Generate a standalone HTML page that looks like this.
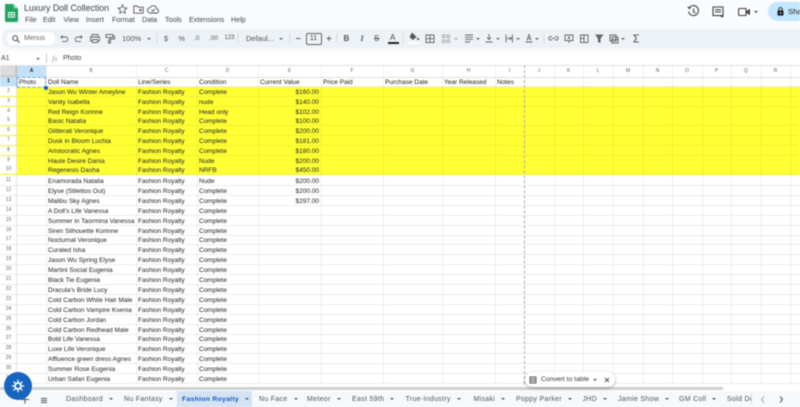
<!DOCTYPE html>
<html><head><meta charset="utf-8"><style>
*{box-sizing:border-box}
html,body{margin:0;padding:0;width:800px;height:407px;overflow:hidden;background:#fff}
body{font-family:"Liberation Sans",sans-serif;color:#333;position:relative}
#w{position:absolute;left:0;top:0;width:800px;height:407px;overflow:hidden;filter:blur(.45px)}
.a{position:absolute;white-space:nowrap}
.m{font-size:7.2px;color:#444;top:15px;line-height:10px}
.tb{font-size:7.2px;color:#555;top:34px;line-height:9px}
.c{position:absolute;border:2px solid transparent;border-top:2.5px solid #666;border-bottom:0;top:37.5px}
.r{position:absolute;left:0;width:800px;height:10px;display:grid;grid-template-columns:17px 29px 90px 61px 61px 63px 62px 59px 53px 29px;font-size:6.5px;color:#222;border-bottom:1px solid #ebeced}
.r>*{font-style:normal;font-weight:400;padding-left:2px;white-space:nowrap;overflow:hidden;line-height:9px;position:relative;top:1px}
.r>b{font-size:5px;text-align:center;color:#666;padding:0;top:0;background:#fff}
.r>.n{text-align:right;padding-right:2px}
.y{background:#ffff33;border-bottom-color:#f2f230}
.v{position:absolute;top:65px;height:319px;width:1px;background:rgba(0,0,0,.06)}
.ch{position:absolute;top:65px;height:12px;font-size:5px;line-height:12px;text-align:center;color:#666}
.t{position:absolute;top:391px;height:16px;line-height:17px;font-size:7px;letter-spacing:.3px;color:#555;white-space:nowrap}
.t:after{content:"";display:inline-block;margin-left:6px;border:2px solid transparent;border-top:2.5px solid #555;border-bottom:0;vertical-align:1.5px}
svg{position:absolute;overflow:visible}
</style></head><body><div id="w">
<div class="a" style="left:0;top:0;width:800px;height:52px;background:#f9fbfd"></div>
<svg style="left:5px;top:4px" width="13" height="18" viewBox="0 0 13 18"><path d="M1.200 0H8.500L13 4.500V16.800a1.200 1.200 0 0 1-1.200 1.200H1.200A1.200 1.200 0 0 1 0 16.800V1.200A1.200 1.200 0 0 1 1.200 0z" fill="#1fa463"/><path d="M8.500 0V4.500H13z" fill="#8ed1b1"/><path d="M3 8h7v5.600H3zM3.900 9v1.300h2.200V9zM6.900 9v1.300h2.200V9zM3.900 11.100v1.500h2.200v-1.500zM6.900 11.100v1.500h2.200v-1.500z" fill="#f0faf5" fill-rule="evenodd"/></svg>
<div class="a" style="left:24px;top:2px;font-size:8.800px;color:#3c4043;line-height:12px">Luxury Doll Collection</div>
<svg style="left:117px;top:3.500px" width="11" height="10" viewBox="0 0 11 10" fill="none" stroke="#555" stroke-width=".8"><path d="M5.500.8 6.800 3.800 10 4.100 7.600 6.200 8.300 9.300 5.500 7.700 2.700 9.300 3.400 6.200 1 4.100 4.200 3.800z"/></svg>
<svg style="left:133px;top:4.500px" width="11" height="9" viewBox="0 0 11 9" fill="none" stroke="#555" stroke-width=".9"><path d="M.8 1h3.200l1 1.200h5.200v6H.8zM7.500 3.600v3M6 5h3"/></svg>
<svg style="left:147px;top:3.500px" width="12" height="10" viewBox="0 0 12 10" fill="none" stroke="#555" stroke-width=".9"><path d="M3 9h6.500a2 2 0 0 0 .3-4A3.600 3.600 0 0 0 3 3.800 2.600 2.600 0 0 0 3 9zM4.500 6l1.200 1.200L8 5"/></svg>
<div class="a m" style="left:25px">File</div><div class="a m" style="left:43px">Edit</div><div class="a m" style="left:63.500px">View</div><div class="a m" style="left:86px">Insert</div><div class="a m" style="left:112px">Format</div><div class="a m" style="left:142px">Data</div><div class="a m" style="left:165px">Tools</div><div class="a m" style="left:189px">Extensions</div><div class="a m" style="left:231px">Help</div>
<svg style="left:687px;top:5px" width="13" height="13" viewBox="0 0 13 13" fill="none" stroke="#444" stroke-width="1.100"><path d="M2 3.200A5 5 0 1 1 1.500 6.500M.8 1.800 2 3.400 3.800 3M6.500 3.500v3.200l2 1.400"/></svg>
<svg style="left:712px;top:6px" width="12" height="12" viewBox="0 0 12 12" fill="none" stroke="#444" stroke-width="1.100"><path d="M1 1h10v8.600H9.500L11 11.300 8.200 9.600H1zM3 3.800h6M3 6h6"/></svg>
<svg style="left:738px;top:7px" width="13" height="10" viewBox="0 0 13 10"><path d="M1.600 1.500H8v7H1.600a1 1 0 0 1-1-1v-5a1 1 0 0 1 1-1z" fill="none" stroke="#444" stroke-width="1.100"/><path d="M8.500 4 12 1.800v6.400L8.500 6z" fill="#444"/></svg>
<div class="c" style="left:753.500px;top:10.500px;border-top-color:#444"></div>
<div class="a" style="left:768px;top:2px;width:50px;height:19px;background:#c2e7ff;border-radius:10px"></div>
<svg style="left:777px;top:7px" width="7" height="9" viewBox="0 0 7 9"><path d="M1.800 3.500V2.300a1.700 1.700 0 0 1 3.400 0v1.200" fill="none" stroke="#222" stroke-width=".9"/><rect x=".5" y="3.400" width="6" height="5.200" rx=".7" fill="#222"/><circle cx="3.500" cy="6" r=".8" fill="#c2e7ff"/></svg>
<div class="a" style="left:788px;top:7px;font-size:7.600px;color:#222;line-height:9px">Sha</div>

<div class="a" style="left:2px;top:29px;width:798px;height:19px;background:#edf2f6;border-radius:9px 0 0 9px"></div>
<div class="a" style="left:7px;top:32px;width:48px;height:13px;background:#fff;border-radius:7px"></div>
<svg style="left:12px;top:34.500px" width="8" height="8" viewBox="0 0 8 8" fill="none" stroke="#444" stroke-width="1"><circle cx="3.200" cy="3.200" r="2.400"/><path d="M5 5l2.600 2.600"/></svg>
<div class="a" style="left:24px;top:34px;font-size:7px;color:#666;line-height:9px">Menus</div>
<svg style="left:0;top:0" width="800" height="52" fill="none" stroke="#666" stroke-width=".9">
<path d="M61 37h4.500a2.200 2.200 0 0 1 0 4.600H62M62.500 35.400 61 37l1.500 1.500"/>
<path d="M82 37h-4.500a2.200 2.200 0 0 0 0 4.600H81M80.500 35.400 82 37l-1.500 1.500"/>
<path d="M92 37v-2.500h6V37M92 41h-1.500v-4h9v4H98M92.500 39.500h5v3h-5z"/>
<path d="M106 34.500h7v3h-7zM113 36h1.500v3h-5v1.500M108.500 40.500h2v2.500h-2z"/>
<path d="M157 33v10M238 33v10M290 33v10M337 33v10M403 33v10M544 33v10" stroke="#d5d8db"/>
<path d="M296 38.500h4.500M326.500 38.500h5M329 36v5"/>
<path d="M426 35h8v7.500h-8zM426 38.700h8M430 35v7.500"/>
<path d="M442.500 35h2.500v2.500h-2.500zM442.500 40h2.500v2.500h-2.500zM447 35h2.500v2.500H447zM447 40h2.500v2.500H447z" stroke="#aaa"/>
<path d="M465 35h8M465 37.300h8M465 39.600h8M465 42h5"/>
<path d="M489 34v5.500M487 37.500l2 2 2-2M485.500 42h7"/>
<path d="M506 34.500v8M512.500 34.500v8M507 38.500h4.500M510 37l1.500 1.500-1.500 1.500"/>
<path d="M525.500 42h7M527 40.500l2-6 2 6M527.700 38.500h2.600"/>
<path d="M552 40h-1.500a1.700 1.700 0 0 1 0-3.400H552M555 36.600h1.500a1.700 1.700 0 0 1 0 3.400H555M551.500 38.300h4"/>
<path d="M565 35h8v5.500h-2.500L569 42v-1.500h-4zM569 36.200v3M567.500 37.700h3"/>
<path d="M580.500 35h7.500v7.500h-7.500zM584 35v7.500M580.500 38.500h3.500"/>
<path d="M596 35h6.500l-2.400 3.500v3.500h-1.700v-3.500z" fill="#666"/>
<path d="M610 35h6v6h-6zM612 37h6v6h-6zM612 39.500h6" stroke-width="1"/>
<path d="M639 35h-5l2.500 3.500-2.500 3.500h5" stroke-width="1.100"/>
</svg>
<div class="a tb" style="left:122px;font-size:7.500px">100%</div>
<div class="c" style="left:146.500px"></div>
<div class="a tb" style="left:164px">$</div>
<div class="a tb" style="left:178.500px">%</div>
<div class="a tb" style="left:194px;font-size:6.500px">.0</div>
<div class="a tb" style="left:209px;font-size:6.500px">.00</div>
<div class="a tb" style="left:224.500px;font-size:6px">123</div>
<div class="a tb" style="left:246px;font-size:7.500px">Defaul...</div>
<div class="c" style="left:279px"></div>
<div class="a" style="left:305.500px;top:32.500px;width:16px;height:12px;border:.8px solid #666;border-radius:2px;font-size:7px;line-height:10.500px;text-align:center;color:#444">11</div>
<div class="a" style="left:343.500px;top:34px;font-size:8px;font-weight:700;color:#555;line-height:9px">B</div>
<div class="a" style="left:360.500px;top:34px;font-size:8px;font-style:italic;color:#555;line-height:9px;font-family:'Liberation Serif',serif;font-weight:700">I</div>
<div class="a" style="left:374px;top:34px;font-size:8px;color:#555;line-height:9px;text-decoration:line-through">S</div>
<div class="a" style="left:390px;top:33px;font-size:8px;color:#444;line-height:9px">A</div>
<div class="a" style="left:388px;top:42px;width:11px;height:1.500px;background:#222"></div>
<svg style="left:408px;top:32px" width="12" height="9" viewBox="0 0 12 9"><path d="M4 .5 8.500 5 5 8 1.500 5z" fill="#555"/><circle cx="10" cy="7" r="1.100" fill="#555"/></svg>
<div class="a" style="left:408px;top:42px;width:11px;height:1.500px;background:#fff"></div>
<div class="c" style="left:454px;border-top-color:#aaa"></div>
<div class="c" style="left:476px"></div>
<div class="c" style="left:496px"></div>
<div class="c" style="left:516px"></div>
<div class="c" style="left:535px"></div>
<div class="c" style="left:621px"></div>

<div class="a" style="left:1px;top:54px;font-size:7px;color:#444;line-height:9px">A1</div>
<div class="c" style="left:36px;top:57.500px"></div>
<div class="a" style="left:46px;top:53px;width:1px;height:10px;background:#ccc"></div>
<div class="a" style="left:52px;top:54px;font-size:7.500px;font-style:italic;font-family:'Liberation Serif',serif;color:#999;line-height:9px">fx</div>
<div class="a" style="left:63px;top:54px;font-size:7px;color:#444;line-height:9px">Photo</div>

<div class="a" style="left:0;top:65px;width:17px;height:12px;background:#dcdcdc;border-right:2px solid #ccc;border-bottom:2px solid #ccc"></div>
<div class="a" style="left:17px;top:65px;width:29px;height:12px;background:#c2e0f7"></div>
<div class="ch" style="left:17px;width:29px;color:#123;font-weight:700">A</div>
<div class="ch" style="left:46px;width:90px">B</div>
<div class="ch" style="left:136px;width:61px">C</div>
<div class="ch" style="left:197px;width:61px">D</div>
<div class="ch" style="left:258px;width:63px">E</div>
<div class="ch" style="left:321px;width:62px">F</div>
<div class="ch" style="left:383px;width:59px">G</div>
<div class="ch" style="left:442px;width:53px">H</div>
<div class="ch" style="left:495px;width:29px">I</div>
<div class="ch" style="left:524px;width:30px">J</div>
<div class="ch" style="left:554px;width:29px">K</div>
<div class="ch" style="left:583px;width:30px">L</div>
<div class="ch" style="left:613px;width:30px">M</div>
<div class="ch" style="left:643px;width:29px">N</div>
<div class="ch" style="left:672px;width:30px">O</div>
<div class="ch" style="left:702px;width:29px">P</div>
<div class="ch" style="left:731px;width:30px">Q</div>
<div class="ch" style="left:761px;width:29px">R</div>
<div class="a" style="left:0;top:64.500px;width:800px;height:1px;background:#e0e1e2"></div>
<div class="a" style="left:0;top:76.500px;width:800px;height:1px;background:#e0e1e2"></div>

<div class="r" style="top:77px"><b style="background:#c2e0f7;color:#123;font-weight:700">1</b><i>Photo</i><i>Doll Name</i><i>Line/Series</i><i>Condition</i><i>Current Value</i><i>Price Paid</i><i>Purchase Date</i><i>Year Released</i><i>Notes</i></div>
<div class="r y" style="top:87px"><b>2</b><i></i><i>Jason Wu Winter Ameyline</i><i>Fashion Royalty</i><i>Complete</i><i class="n">$160.00</i></div>
<div class="r y" style="top:96.800px"><b>3</b><i></i><i>Vanity Isabella</i><i>Fashion Royalty</i><i>nude</i><i class="n">$140.00</i></div>
<div class="r y" style="top:106.600px"><b>4</b><i></i><i>Red Reign Korinne</i><i>Fashion Royalty</i><i>Head only</i><i class="n">$102.00</i></div>
<div class="r y" style="top:116.400px"><b>5</b><i></i><i>Basic Natalia</i><i>Fashion Royalty</i><i>Complete</i><i class="n">$100.00</i></div>
<div class="r y" style="top:126.200px"><b>6</b><i></i><i>Glitterati Veronique</i><i>Fashion Royalty</i><i>Complete</i><i class="n">$200.00</i></div>
<div class="r y" style="top:136px"><b>7</b><i></i><i>Dusk in Bloom Luchia</i><i>Fashion Royalty</i><i>Complete</i><i class="n">$181.00</i></div>
<div class="r y" style="top:145.800px"><b>8</b><i></i><i>Aristocratic Agnes</i><i>Fashion Royalty</i><i>Complete</i><i class="n">$180.00</i></div>
<div class="r y" style="top:155.600px"><b>9</b><i></i><i>Haute Desire Dania</i><i>Fashion Royalty</i><i>Nude</i><i class="n">$200.00</i></div>
<div class="r y" style="top:165.400px"><b>10</b><i></i><i>Regenesis Dasha</i><i>Fashion Royalty</i><i>NRFB</i><i class="n">$450.00</i></div>
<div class="r" style="top:176px"><b>11</b><i></i><i>Enamorada Natalia</i><i>Fashion Royalty</i><i>Nude</i><i class="n">$200.00</i></div>
<div class="r" style="top:185.900px"><b>12</b><i></i><i>Elyse (Stilettos Out)</i><i>Fashion Royalty</i><i>Complete</i><i class="n">$200.00</i></div>
<div class="r" style="top:195.800px"><b>13</b><i></i><i>Malibu Sky Agnes</i><i>Fashion Royalty</i><i>Complete</i><i class="n">$297.00</i></div>
<div class="r" style="top:205.700px"><b>14</b><i></i><i>A Doll's Life Vanessa</i><i>Fashion Royalty</i><i>Complete</i></div>
<div class="r" style="top:215.600px"><b>15</b><i></i><i>Summer in Taormina Vanessa</i><i>Fashion Royalty</i><i>Complete</i></div>
<div class="r" style="top:225.500px"><b>16</b><i></i><i>Siren Silhouette Korinne</i><i>Fashion Royalty</i><i>Complete</i></div>
<div class="r" style="top:235.400px"><b>17</b><i></i><i>Nocturnal Veronique</i><i>Fashion Royalty</i><i>Complete</i></div>
<div class="r" style="top:245.300px"><b>18</b><i></i><i>Curated Isha</i><i>Fashion Royalty</i><i>Complete</i></div>
<div class="r" style="top:255.200px"><b>19</b><i></i><i>Jason Wu Spring Elyse</i><i>Fashion Royalty</i><i>Complete</i></div>
<div class="r" style="top:265.100px"><b>20</b><i></i><i>Martini Social Eugenia</i><i>Fashion Royalty</i><i>Complete</i></div>
<div class="r" style="top:275px"><b>21</b><i></i><i>Black Tie Eugenia</i><i>Fashion Royalty</i><i>Complete</i></div>
<div class="r" style="top:284.900px"><b>22</b><i></i><i>Dracula's Bride Lucy</i><i>Fashion Royalty</i><i>Complete</i></div>
<div class="r" style="top:294.800px"><b>23</b><i></i><i>Cold Carbon White Hair Male</i><i>Fashion Royalty</i><i>Complete</i></div>
<div class="r" style="top:304.700px"><b>24</b><i></i><i>Cold Carbon Vampire Ksenia</i><i>Fashion Royalty</i><i>Complete</i></div>
<div class="r" style="top:314.600px"><b>25</b><i></i><i>Cold Carbon Jordan</i><i>Fashion Royalty</i><i>Complete</i></div>
<div class="r" style="top:324.500px"><b>26</b><i></i><i>Cold Carbon Redhead Male</i><i>Fashion Royalty</i><i>Complete</i></div>
<div class="r" style="top:334.400px"><b>27</b><i></i><i>Bold Life Vanessa</i><i>Fashion Royalty</i><i>Complete</i></div>
<div class="r" style="top:344.300px"><b>28</b><i></i><i>Luxe Life Veronique</i><i>Fashion Royalty</i><i>Complete</i></div>
<div class="r" style="top:354.200px"><b>29</b><i></i><i>Affluence green dress Agnes</i><i>Fashion Royalty</i><i>Complete</i></div>
<div class="r" style="top:364.100px"><b>30</b><i></i><i>Summer Rose Eugenia</i><i>Fashion Royalty</i><i>Complete</i></div>
<div class="r" style="top:374px"><b>31</b><i></i><i>Urban Safari Eugenia</i><i>Fashion Royalty</i><i>Complete</i></div>

<div class="v" style="left:16px;background:rgba(0,0,0,.1)"></div><div class="v" style="left:46px"></div><div class="v" style="left:136px"></div><div class="v" style="left:197px"></div><div class="v" style="left:258px"></div><div class="v" style="left:321px"></div><div class="v" style="left:383px"></div><div class="v" style="left:442px"></div><div class="v" style="left:495px"></div><div class="v" style="left:554px"></div><div class="v" style="left:583px"></div><div class="v" style="left:613px"></div><div class="v" style="left:643px"></div><div class="v" style="left:672px"></div><div class="v" style="left:702px"></div><div class="v" style="left:731px"></div><div class="v" style="left:761px"></div><div class="v" style="left:790px"></div>
<div class="a" style="left:524px;top:65px;height:319px;width:0;border-left:1px dashed #aaa"></div>
<div class="a" style="left:17px;top:77px;width:29px;height:10.500px;border:1px dashed #6aa9f0"></div>
<div class="a" style="left:44px;top:85.500px;width:4px;height:4px;border-radius:50%;background:#1a56c8"></div>

<div class="a" style="left:0;top:384px;width:800px;height:7px;background:#fff"></div>
<div class="a" style="left:0;top:386.500px;width:723px;height:3.500px;background:#cfd0d1"></div>
<div class="a" style="left:0;top:391px;width:800px;height:16px;background:#f6f8fb"></div>
<div class="a" style="left:177px;top:391px;width:75px;height:16px;background:#d3e3f3"></div>
<svg style="left:20px;top:395px" width="10" height="9" viewBox="0 0 10 9" fill="none" stroke="#555" stroke-width="1"><path d="M5 .5v8M1 4.500h8"/></svg>
<svg style="left:40px;top:398px" width="8" height="6" viewBox="0 0 8 6" fill="none" stroke="#555" stroke-width="1"><path d="M1 .5h6M1 2.500h6M1 4.500h6"/></svg>
<div class="t" style="left:66px">Dashboard</div>
<div class="t" style="left:124px">Nu Fantasy</div>
<div class="t" style="left:182px;color:#0b57d0;font-weight:700;font-size:6.800px">Fashion Royalty</div>
<div class="t" style="left:259px">Nu Face</div>
<div class="t" style="left:307px">Meteor</div>
<div class="t" style="left:352px">East 59th</div>
<div class="t" style="left:405.500px">True-Industry</div>
<div class="t" style="left:473.500px">Misaki</div>
<div class="t" style="left:516px">Poppy Parker</div>
<div class="t" style="left:582.500px">JHD</div>
<div class="t" style="left:618px">Jamie Show</div>
<div class="t" style="left:679px">GM Coll</div>
<div class="a" style="left:727px;top:391px;width:24px;height:16px;overflow:hidden;line-height:17px;font-size:7px;letter-spacing:.3px;color:#555">Sold Dolls</div>
<div class="a" style="left:751px;top:393px;width:1px;height:12px;background:#ddd"></div>
<svg style="left:760px;top:396px" width="30" height="7" viewBox="0 0 30 7" fill="none" stroke-width="1"><path d="M4 .5 1.500 3.500 4 6.500" stroke="#aaa"/><path d="M20 .5l2.500 3-2.500 3" stroke="#555"/></svg>

<div class="a" style="left:525px;top:372px;width:90px;height:15px;background:#fff;border-radius:8px;box-shadow:0 1px 3px rgba(0,0,0,.3)"></div>
<svg style="left:529px;top:375.500px" width="8" height="8" viewBox="0 0 8 8" fill="none" stroke="#555" stroke-width=".9"><path d="M1 1h6v6H1zM1 3h6M1 5h6"/></svg>
<div class="a" style="left:541px;top:375px;font-size:6.800px;color:#333;line-height:9px">Convert to table</div>
<div class="a" style="left:592.500px;top:378.500px;border:2px solid transparent;border-top:2.500px solid #555;border-bottom:0"></div>
<svg style="left:604px;top:376.500px" width="6" height="6" viewBox="0 0 6 6" fill="none" stroke="#555" stroke-width=".9"><path d="M1 1l4 4M5 1 1 5"/></svg>

<div class="a" style="left:4px;top:372px;width:28px;height:28px;border-radius:50%;background:#1565c0"></div>
<svg style="left:11px;top:379px" width="14" height="14" viewBox="0 0 14 14" fill="none" stroke="#fff"><circle cx="7" cy="7" r="3" stroke-width="1.800"/><path d="M7 .8v2.400M7 10.800v2.400M.8 7h2.400M10.800 7h2.400M2.600 2.600l1.700 1.700M9.700 9.700l1.700 1.700M2.600 11.400l1.700-1.700M9.700 4.300l1.700-1.700" stroke-width="1.300"/></svg>
</div></body></html>
